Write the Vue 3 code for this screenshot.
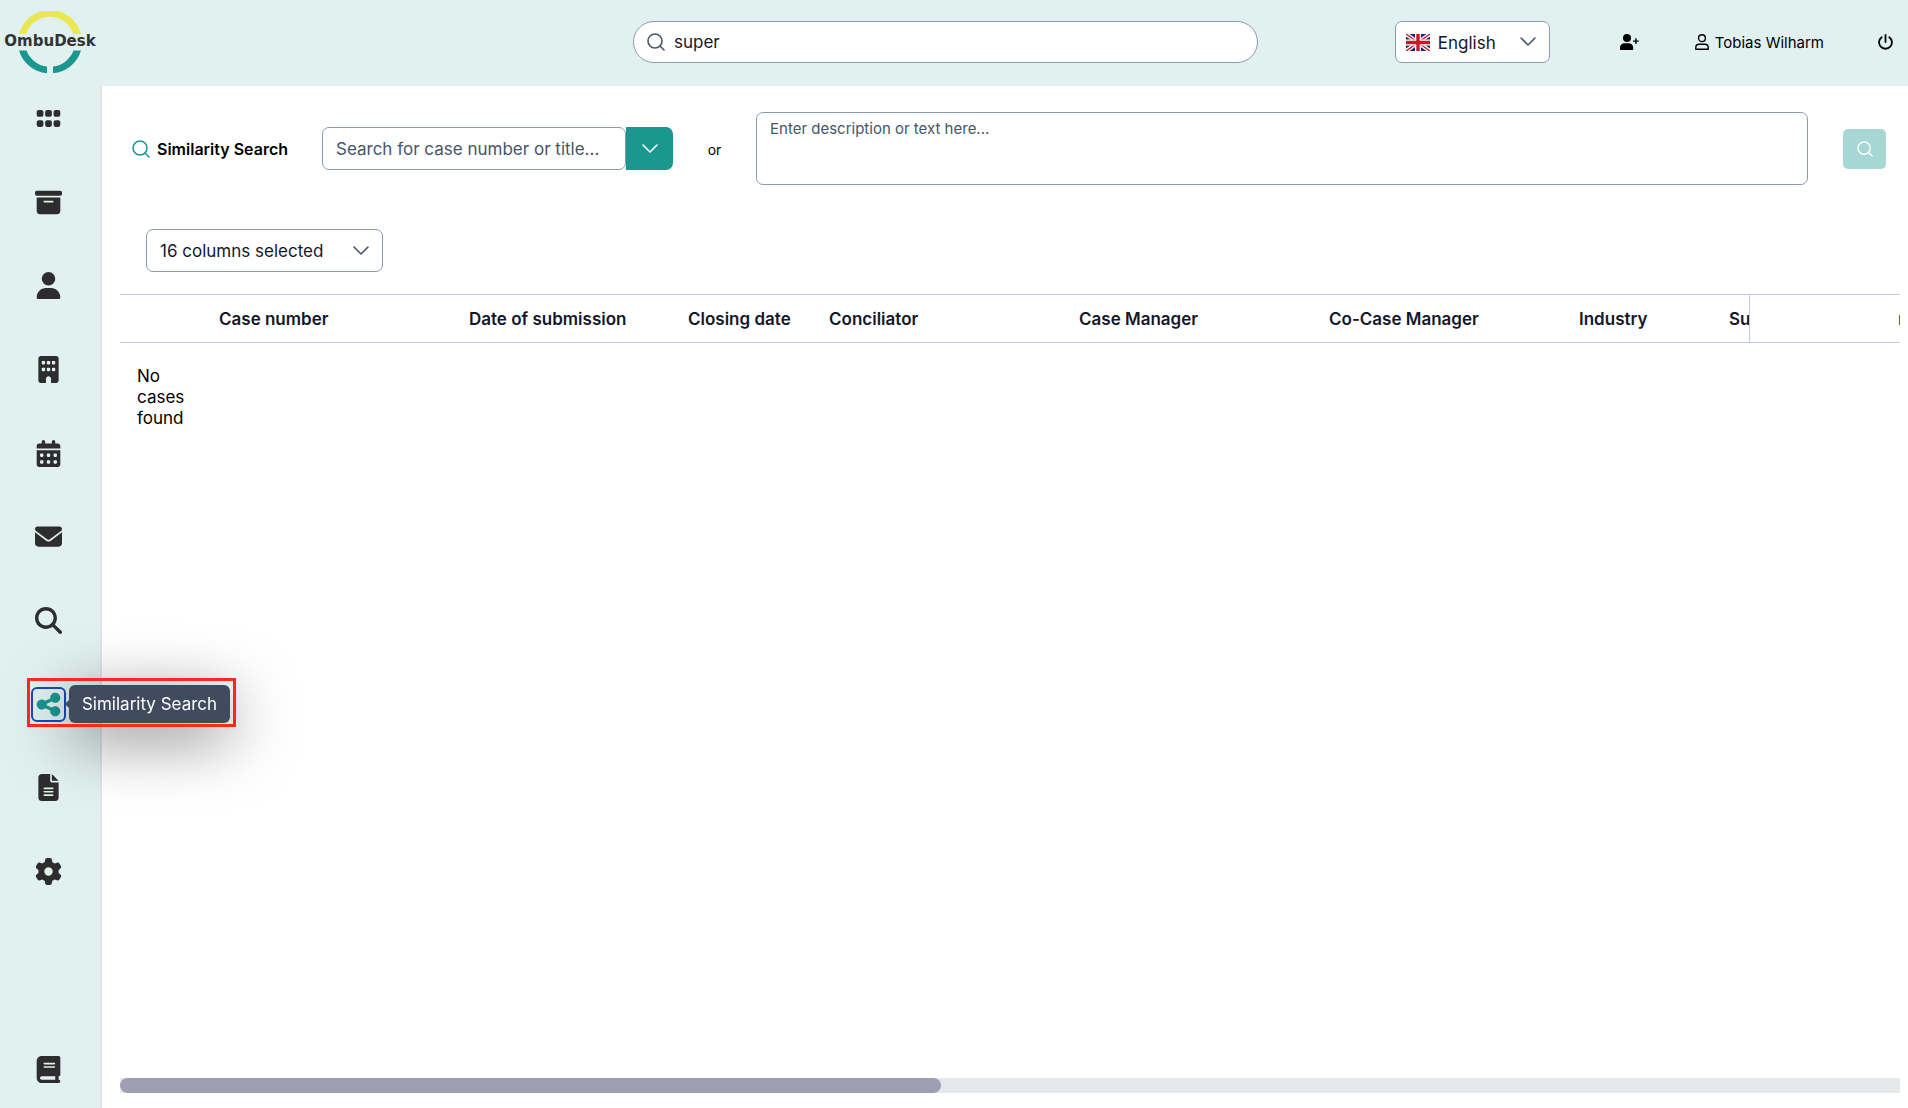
<script setup>
import { ref } from 'vue'

const query = ref('super')
const caseQuery = ref('')
const description = ref('')

const navItems = [
  { label: 'Dashboard', box: '0 0 448 512', path: 'M128 136c0-22.100-17.900-40-40-40L40 96C17.900 96 0 113.900 0 136l0 48c0 22.100 17.900 40 40 40l48 0c22.100 0 40-17.900 40-40l0-48zm0 192c0-22.100-17.900-40-40-40l-48 0c-22.100 0-40 17.900-40 40l0 48c0 22.100 17.900 40 40 40l48 0c22.100 0 40-17.900 40-40l0-48zm32-192l0 48c0 22.100 17.900 40 40 40l48 0c22.100 0 40-17.900 40-40l0-48c0-22.100-17.900-40-40-40l-48 0c-22.100 0-40 17.900-40 40zM288 328c0-22.100-17.900-40-40-40l-48 0c-22.100 0-40 17.900-40 40l0 48c0 22.100 17.900 40 40 40l48 0c22.100 0 40-17.900 40-40l0-48zm32-192l0 48c0 22.100 17.900 40 40 40l48 0c22.100 0 40-17.900 40-40l0-48c0-22.100-17.900-40-40-40l-48 0c-22.100 0-40 17.900-40 40zM448 328c0-22.100-17.900-40-40-40l-48 0c-22.100 0-40 17.900-40 40l0 48c0 22.100 17.900 40 40 40l48 0c22.100 0 40-17.900 40-40l0-48z' },
  { label: 'Cases', box: '0 0 512 512', path: 'M32 32H480c17.700 0 32 14.300 32 32V96c0 17.700-14.300 32-32 32H32C14.300 128 0 113.700 0 96V64C0 46.300 14.300 32 32 32zm0 128H480V416c0 35.300-28.700 64-64 64H96c-35.300 0-64-28.700-64-64V160zm128 80c0 8.800 7.200 16 16 16H336c8.800 0 16-7.200 16-16s-7.200-16-16-16H176c-8.800 0-16 7.200-16 16z' },
  { label: 'Contacts', box: '0 0 448 512', path: 'M224 256A128 128 0 1 0 224 0a128 128 0 1 0 0 256zm-45.700 48C79.800 304 0 383.800 0 482.300C0 498.700 13.300 512 29.700 512H418.300c16.400 0 29.700-13.300 29.700-29.700C448 383.800 368.200 304 269.700 304H178.300z' },
  { label: 'Companies', box: '0 0 384 512', path: 'M48 0C21.500 0 0 21.500 0 48V464c0 26.500 21.500 48 48 48h96V432c0-26.500 21.500-48 48-48s48 21.500 48 48v80h96c26.500 0 48-21.500 48-48V48c0-26.500-21.500-48-48-48H48zM64 240c0-8.800 7.200-16 16-16h32c8.800 0 16 7.200 16 16v32c0 8.800-7.200 16-16 16H80c-8.800 0-16-7.200-16-16V240zm112-16h32c8.800 0 16 7.200 16 16v32c0 8.800-7.200 16-16 16H176c-8.800 0-16-7.200-16-16V240c0-8.800 7.200-16 16-16zm80 16c0-8.800 7.200-16 16-16h32c8.800 0 16 7.200 16 16v32c0 8.800-7.200 16-16 16H272c-8.800 0-16-7.200-16-16V240zM80 96h32c8.800 0 16 7.200 16 16v32c0 8.800-7.200 16-16 16H80c-8.800 0-16-7.200-16-16V112c0-8.800 7.200-16 16-16zm80 16c0-8.800 7.200-16 16-16h32c8.800 0 16 7.200 16 16v32c0 8.800-7.200 16-16 16H176c-8.800 0-16-7.200-16-16V112zM272 96h32c8.800 0 16 7.200 16 16v32c0 8.800-7.200 16-16 16H272c-8.800 0-16-7.200-16-16V112c0-8.800 7.200-16 16-16z' },
  { label: 'Calendar', box: '0 0 448 512', path: 'M128 0c17.700 0 32 14.300 32 32V64H288V32c0-17.700 14.300-32 32-32s32 14.300 32 32V64h48c26.500 0 48 21.500 48 48v48H0V112C0 85.500 21.500 64 48 64H96V32c0-17.700 14.300-32 32-32zM0 192H448V464c0 26.500-21.500 48-48 48H48c-26.500 0-48-21.500-48-48V192zm64 80v32c0 8.800 7.200 16 16 16h32c8.800 0 16-7.200 16-16V272c0-8.800-7.200-16-16-16H80c-8.800 0-16 7.200-16 16zm128 0v32c0 8.800 7.200 16 16 16h32c8.800 0 16-7.200 16-16V272c0-8.800-7.200-16-16-16H208c-8.800 0-16 7.200-16 16zm144-16c-8.800 0-16 7.200-16 16v32c0 8.800 7.200 16 16 16h32c8.800 0 16-7.200 16-16V272c0-8.800-7.200-16-16-16H336zM64 400v32c0 8.800 7.200 16 16 16h32c8.800 0 16-7.200 16-16V400c0-8.800-7.200-16-16-16H80c-8.800 0-16 7.200-16 16zm144-16c-8.800 0-16 7.200-16 16v32c0 8.800 7.200 16 16 16h32c8.800 0 16-7.200 16-16V400c0-8.800-7.200-16-16-16H208zm112 16v32c0 8.800 7.200 16 16 16h32c8.800 0 16-7.200 16-16V400c0-8.800-7.200-16-16-16H336c-8.800 0-16 7.200-16 16z' },
  { label: 'Messages', box: '0 0 512 512', path: 'M48 64C21.500 64 0 85.500 0 112c0 15.100 7.100 29.300 19.200 38.400L236.800 313.600c11.400 8.500 27 8.500 38.400 0L492.800 150.400c12.100-9.100 19.200-23.300 19.200-38.400c0-26.500-21.500-48-48-48H48zM0 176V384c0 35.300 28.700 64 64 64H448c35.300 0 64-28.700 64-64V176L294.400 339.200c-22.800 17.100-54 17.100-76.800 0L0 176z' },
  { label: 'Search', box: '0 0 512 512', path: 'M416 208c0 45.900-14.900 88.300-40 122.700L502.600 457.400c12.500 12.500 12.500 32.800 0 45.300s-32.800 12.500-45.300 0L330.700 376c-34.400 25.200-76.800 40-122.700 40C93.100 416 0 322.900 0 208S93.100 0 208 0S416 93.100 416 208zM208 352a144 144 0 1 0 0-288 144 144 0 1 0 0 288z' },
  { label: 'Similarity Search', active: true, box: '0 0 448 512', path: 'M352 224c53 0 96-43 96-96s-43-96-96-96s-96 43-96 96c0 4 .2 8 .7 11.900l-94.100 47C145.400 170.200 121.900 160 96 160c-53 0-96 43-96 96s43 96 96 96c25.900 0 49.400-10.200 66.600-26.900l94.100 47c-.5 3.900-.7 7.800-.7 11.900c0 53 43 96 96 96s96-43 96-96s-43-96-96-96c-25.900 0-49.400 10.200-66.600 26.900l-94.100-47c.5-3.900 .7-7.800 .7-11.900s-.2-8-.7-11.900l94.100-47C302.600 213.800 326.100 224 352 224z' },
  { label: 'Documents', box: '0 0 384 512', path: 'M64 0C28.700 0 0 28.700 0 64V448c0 35.300 28.700 64 64 64H320c35.300 0 64-28.700 64-64V160H256c-17.700 0-32-14.300-32-32V0H64zM256 0V128H384L256 0zM112 256H272c8.800 0 16 7.200 16 16s-7.200 16-16 16H112c-8.800 0-16-7.200-16-16s7.200-16 16-16zm0 64H272c8.800 0 16 7.200 16 16s-7.200 16-16 16H112c-8.800 0-16-7.200-16-16s7.200-16 16-16zm0 64H272c8.800 0 16 7.200 16 16s-7.200 16-16 16H112c-8.800 0-16-7.200-16-16s7.200-16 16-16z' },
  { label: 'Settings', box: '0 0 512 512', path: 'M495.900 166.600c3.200 8.700 .5 18.400-6.400 24.600l-43.300 39.400c1.100 8.300 1.700 16.800 1.700 25.400s-.6 17.100-1.700 25.400l43.300 39.400c6.900 6.200 9.600 15.900 6.400 24.600c-4.400 11.900-9.700 23.300-15.800 34.300l-4.700 8.100c-6.600 11-14 21.400-22.100 31.200c-5.900 7.200-15.700 9.600-24.500 6.800l-55.700-17.700c-13.400 10.300-28.200 18.900-44 25.400l-12.500 57.100c-2 9.100-9 16.300-18.200 17.800c-13.800 2.300-28 3.500-42.500 3.500s-28.700-1.200-42.500-3.500c-9.200-1.500-16.200-8.700-18.200-17.800l-12.500-57.100c-15.800-6.500-30.600-15.100-44-25.400L83.100 425.900c-8.800 2.800-18.600 .3-24.500-6.800c-8.100-9.800-15.500-20.200-22.100-31.200l-4.700-8.100c-6.100-11-11.400-22.400-15.800-34.300c-3.200-8.700-.5-18.400 6.400-24.600l43.300-39.400C64.600 273.100 64 264.600 64 256s.6-17.100 1.700-25.400L22.400 191.200c-6.900-6.200-9.600-15.900-6.400-24.600c4.400-11.900 9.700-23.300 15.800-34.300l4.700-8.100c6.600-11 14-21.400 22.100-31.200c5.900-7.200 15.700-9.600 24.500-6.800l55.700 17.700c13.400-10.300 28.200-18.900 44-25.400l12.500-57.100c2-9.100 9-16.300 18.200-17.800C227.300 1.200 241.500 0 256 0s28.700 1.200 42.500 3.500c9.200 1.500 16.200 8.700 18.200 17.800l12.500 57.100c15.800 6.500 30.600 15.100 44 25.400l55.700-17.700c8.800-2.800 18.600-.3 24.500 6.800c8.100 9.800 15.500 20.200 22.100 31.200l4.700 8.100c6.100 11 11.400 22.400 15.800 34.300zM256 336a80 80 0 1 0 0-160 80 80 0 1 0 0 160z' },
]

const columns = [
  { title: 'Case number', width: 250 },
  { title: 'Date of submission', width: 219 },
  { title: 'Closing date', width: 141 },
  { title: 'Conciliator', width: 250 },
  { title: 'Case Manager', width: 250 },
  { title: 'Co-Case Manager', width: 250 },
  { title: 'Industry', width: 150 },
  { title: 'Subject', width: 250 },
]
</script>

<template>
  <div class="app">
    <header class="topbar">
      <a class="logo" href="#" aria-label="OmbuDesk home">
        <svg viewBox="0 0 92 64" width="92" height="64" aria-hidden="true">
          <path d="M15 23A32 32 0 0 1 77 23L69.500 23A25 25 0 0 0 22 23Z" fill="#ebe753" />
          <path d="M15 39.500A32 32 0 0 0 43 62.200L43 55.500A25 25 0 0 1 22.500 39.500Z" fill="#1a9890" />
          <path d="M77 39.500A32 32 0 0 1 49 62.200L49 55.500A25 25 0 0 0 69.500 39.500Z" fill="#1a9890" />
        </svg>
        <span class="logo-name">OmbuDesk</span>
      </a>

      <label class="global-search">
        <svg class="pi" viewBox="0 0 18 18" width="18" height="18" aria-hidden="true">
          <circle cx="8" cy="8" r="7" /><path d="M13 13l4 4" />
        </svg>
        <input v-model="query" type="text" aria-label="Search" />
      </label>

      <div class="top-actions">
        <div class="select-box language">
          <svg class="flag" viewBox="0 0 24 17" width="24" height="17" aria-hidden="true">
            <path fill="#1c2a6b" d="M0 0h24v17H0z" />
            <path stroke="#fff" stroke-width="4" d="M0 0l24 17M24 0L0 17" />
            <path stroke="#cf142b" stroke-width="1.400" d="M0 0l24 17M24 0L0 17" />
            <path stroke="#fff" stroke-width="6" d="M12 0v17M0 8.500h24" />
            <path stroke="#cf142b" stroke-width="3.400" d="M12 0v17M0 8.500h24" />
          </svg>
          <select aria-label="Language"><option>English</option></select>
          <svg class="pi" viewBox="0 0 16 10" width="16" height="10" aria-hidden="true"><path d="M1 1l7 7 7-7" /></svg>
        </div>

        <button class="icon-button add-user" aria-label="Add user">
          <svg viewBox="0 0 19 16" width="19" height="16" fill="currentColor" aria-hidden="true">
            <circle cx="7" cy="4" r="4" />
            <path d="M0 15.200V13.500C0 11 2 9.200 4.500 9.200h4.200C11.200 9.200 13.200 11 13.200 13.500v1.700c0 .5-.3.800-.8.800H.8C.3 16 0 15.700 0 15.200z" />
            <path d="M15.200 4.200h1.400v2.200h2.200v1.400h-2.200V10h-1.400V7.800H13V6.400h2.200z" />
          </svg>
        </button>

        <a class="profile" href="#">
          <svg viewBox="0 0 14 16" width="14" height="16" fill="none" stroke="currentColor" stroke-width="1.400" aria-hidden="true">
            <circle cx="7" cy="4.200" r="3.400" />
            <path d="M.8 15.200v-1.600c0-1.900 1.400-3.300 3.300-3.300h5.800c1.900 0 3.300 1.400 3.300 3.300v1.600z" stroke-linejoin="round" />
          </svg>
          <span>Tobias Wilharm</span>
        </a>

        <button class="icon-button power" aria-label="Log out">
          <svg viewBox="0 0 15 16" width="15" height="16" fill="none" stroke="currentColor" stroke-width="1.800" stroke-linecap="round" aria-hidden="true">
            <path d="M7.500 1v7M3.700 3.200a6.400 6.400 0 1 0 7.600 0" />
          </svg>
        </button>
      </div>
    </header>

    <div class="body">
      <aside class="sidebar">
        <nav class="nav" aria-label="Main">
          <a v-for="item in navItems" :key="item.label" href="#" class="nav-link" :class="{ active: item.active }" :aria-label="item.label">
            <svg :viewBox="item.box" width="27" height="27" fill="currentColor" aria-hidden="true"><path fill-rule="evenodd" :d="item.path" /></svg>
            <span v-if="item.active" class="marker"></span>
            <span v-if="item.active" class="tooltip" role="tooltip">{{ item.label }}</span>
          </a>
        </nav>
        <a class="nav-link" href="#" aria-label="Manual">
          <svg viewBox="0 0 448 512" width="27" height="27" fill="currentColor" aria-hidden="true">
            <path d="M96 0C43 0 0 43 0 96V416c0 53 43 96 96 96H384h32c17.700 0 32-14.300 32-32s-14.300-32-32-32V384c17.700 0 32-14.300 32-32V32c0-17.700-14.300-32-32-32H384 96zm0 384H352v64H96c-17.700 0-32-14.300-32-32s14.300-32 32-32zm32-240c0-8.800 7.200-16 16-16H336c8.800 0 16 7.200 16 16s-7.200 16-16 16H144c-8.800 0-16-7.200-16-16zm16 48H336c8.800 0 16 7.200 16 16s-7.200 16-16 16H144c-8.800 0-16-7.200-16-16s7.200-16 16-16z" />
          </svg>
        </a>
      </aside>

      <main class="content">
        <form class="search-form" @submit.prevent>
          <h1 class="title">
            <svg class="pi" viewBox="0 0 18 18" width="18" height="18" aria-hidden="true">
              <circle cx="8" cy="8" r="7" /><path d="M13 13l4 4" />
            </svg>
            <span>Similarity Search</span>
          </h1>
          <div class="autocomplete">
            <input v-model="caseQuery" type="text" placeholder="Search for case number or title..." aria-label="Case number or title" />
            <button type="button" aria-label="Show cases">
              <svg class="pi" viewBox="0 0 16 10" width="16" height="10" aria-hidden="true"><path d="M1 1l7 7 7-7" /></svg>
            </button>
          </div>
          <span class="or">or</span>
          <textarea v-model="description" placeholder="Enter description or text here..." aria-label="Description"></textarea>
          <button class="submit" disabled aria-label="Search similar cases">
            <svg class="pi" viewBox="0 0 18 18" width="16" height="16" aria-hidden="true">
              <circle cx="8" cy="8" r="7" /><path d="M13 13l4 4" />
            </svg>
          </button>
        </form>

        <div class="select-box columns">
          <select aria-label="Visible columns"><option>16 columns selected</option></select>
          <svg class="pi" viewBox="0 0 16 10" width="16" height="10" aria-hidden="true"><path d="M1 1l7 7 7-7" /></svg>
        </div>

        <section class="grid">
          <div class="viewport">
            <table>
              <colgroup>
                <col class="lead" />
                <col v-for="c in columns" :key="c.title" :style="{ width: c.width + 'px' }" />
                <col class="rest" />
                <col class="last" />
              </colgroup>
              <thead>
                <tr>
                  <th></th>
                  <th v-for="c in columns" :key="c.title">{{ c.title }}</th>
                  <th></th>
                  <th class="frozen">r</th>
                </tr>
              </thead>
              <tbody>
                <tr><td>No cases found</td></tr>
              </tbody>
            </table>
          </div>
          <div class="track"><div class="thumb"></div></div>
        </section>
      </main>
    </div>
  </div>
</template>

<style>
body {
  background: #fff;
}
</style>

<style scoped>
.app,
.app * {
  box-sizing: border-box;
}
.app {
  display: flex;
  flex-direction: column;
  min-height: 100vh;
  overflow: hidden;
  font-family: Inter, "Liberation Sans", sans-serif;
  font-size: 17px;
  line-height: 21px;
  color: #000;
}
input,
select,
textarea,
button {
  font: inherit;
  color: inherit;
}
button {
  border: 0;
  padding: 0;
  background: none;
}
a {
  color: inherit;
  text-decoration: none;
}
svg {
  display: block;
  flex: none;
}
.pi {
  fill: none;
  stroke: currentColor;
  stroke-width: 1.600;
  stroke-linecap: round;
  stroke-linejoin: round;
}

.topbar {
  display: grid;
  grid-template-columns: 1fr 625px 1fr;
  align-items: start;
  height: 86px;
  padding: 0 15px 0 8px;
  background: #e1f1f0;
}
.logo {
  position: relative;
  width: 92px;
  margin: 11px 0 0 -4px;
}
.logo-name {
  position: absolute;
  top: 20px;
  left: 0;
  width: 92px;
  text-align: center;
  font-family: "DejaVu Sans", sans-serif;
  font-size: 15px;
  font-weight: 700;
  color: #333;
}
.global-search {
  display: flex;
  align-items: center;
  gap: 9px;
  height: 42px;
  margin: 21px 5px 0 -5px;
  padding: 0 13px;
  border: 1px solid #8c99b3;
  border-radius: 21px;
  background: #fff;
  color: #475569;
}
.global-search input {
  flex: 1;
  min-width: 0;
  padding: 0;
  border: 0;
  outline: 0;
  background: none;
  color: #14172b;
}
.top-actions {
  display: flex;
  align-items: center;
  justify-content: flex-end;
  height: 42px;
  margin-top: 21px;
  font-size: 15px;
}
.select-box {
  position: relative;
  display: flex;
  align-items: center;
  border: 1px solid #8c99b3;
  border-radius: 7px;
  background: #fff;
  font-size: 17px;
  color: #475569;
}
.select-box select {
  appearance: none;
  flex: 1;
  min-width: 0;
  height: 100%;
  padding: 2px 0 0;
  border: 0;
  outline: 0;
  background: none;
  color: #14172b;
}
.language {
  width: 155px;
  height: 42px;
  padding: 0 13px 0 10px;
  gap: 8px;
}
.add-user {
  margin-left: 70px;
}
.profile {
  display: flex;
  align-items: center;
  gap: 6px;
  margin-left: 56px;
}
.power {
  margin-left: 54px;
}

.body {
  display: flex;
  flex: 1;
}
.sidebar {
  display: flex;
  flex: none;
  flex-direction: column;
  align-items: center;
  gap: 171px;
  width: 102px;
  padding: 19px 3px 25px 0;
  border-right: 2px solid #e2e2e8;
  background: #e1f1f0;
  color: #2d2d2d;
}
.nav {
  display: flex;
  flex: 1;
  flex-direction: column;
  justify-content: space-between;
}
.nav-link {
  position: relative;
  display: block;
}
.nav-link.active {
  color: #1a9890;
  border-radius: 2px;
  outline: 2px solid #1d4ab8;
  outline-offset: 2px;
}
.tooltip {
  position: absolute;
  top: -6px;
  left: 34px;
  z-index: 2;
  width: 161px;
  padding: 9px 0 8px;
  border-radius: 6px;
  background: #414b5e;
  color: #fff;
  text-align: center;
  white-space: nowrap;
  box-shadow: 0 14px 64px rgba(0, 0, 0, 0.55);
}
.tooltip::before {
  content: "";
  position: absolute;
  top: 15px;
  left: -4px;
  border: solid transparent;
  border-width: 4px 4px 4px 0;
  border-right-color: #414b5e;
}
.marker {
  position: absolute;
  top: -13px;
  left: -8px;
  z-index: 3;
  width: 209px;
  height: 49px;
  border: 3px solid #fa2a16;
}

.content {
  display: flex;
  flex: 1;
  flex-direction: column;
  min-width: 0;
  padding: 26px 8px 15px 18px;
}
.search-form {
  display: flex;
  align-items: center;
  padding: 0 14px 0 12px;
  font-size: 15px;
}
.title {
  display: flex;
  align-items: center;
  gap: 7px;
  width: 190px;
  margin: 0;
  font-size: 16px;
  font-weight: 600;
  white-space: nowrap;
}
.title span {
  padding-top: 2px;
}
.title .pi {
  color: #1a9890;
}
.autocomplete {
  display: flex;
  width: 351px;
  height: 43px;
  font-size: 17px;
}
.autocomplete input {
  flex: 1;
  min-width: 0;
  padding: 2px 13px 0;
  border: 1px solid #8c99b3;
  border-radius: 7px;
}
::placeholder {
  color: #475569;
  opacity: 1;
}
.autocomplete button {
  display: grid;
  place-items: center;
  width: 47px;
  border-radius: 0 7px 7px 0;
  background: #1a9890;
  color: #fff;
}
.or {
  width: 83px;
  padding-top: 2px;
  text-align: center;
  font-size: 14px;
}
textarea {
  flex: 1;
  height: 73px;
  padding: 5px 13px;
  border: 1px solid #8c99b3;
  border-radius: 7px;
  resize: none;
}
.submit {
  display: grid;
  place-items: center;
  width: 43px;
  height: 40px;
  margin-left: 35px;
  border-radius: 5px;
  background: #a6d7d4;
  color: #fff;
}
.columns {
  width: 237px;
  height: 43px;
  margin: 44px 0 22px 26px;
  padding: 0 13px;
}

.grid {
  display: flex;
  flex: 1;
  flex-direction: column;
}
.viewport {
  flex: 1;
  overflow: hidden;
}
table {
  width: 3859px;
  table-layout: fixed;
  border-collapse: separate;
  border-spacing: 0;
}
.lead {
  width: 82px;
}
.last {
  width: 151px;
}
th {
  height: 49px;
  padding: 2px 17px 0;
  border: solid #c3cbdb;
  border-width: 1px 0;
  text-align: left;
  font-weight: 600;
  color: #14172b;
  background: #fff;
}
th.frozen {
  position: sticky;
  right: 0;
  padding: 2px 0 0 148px;
  border-left-width: 1px;
  overflow: hidden;
  font-weight: 400;
}
td {
  padding: 23px 17px;
}
.track {
  height: 15px;
  background: #e4e8eb;
}
.thumb {
  width: 46.1%;
  height: 15px;
  border-radius: 8px;
  background: #9f9fb4;
}
</style>
